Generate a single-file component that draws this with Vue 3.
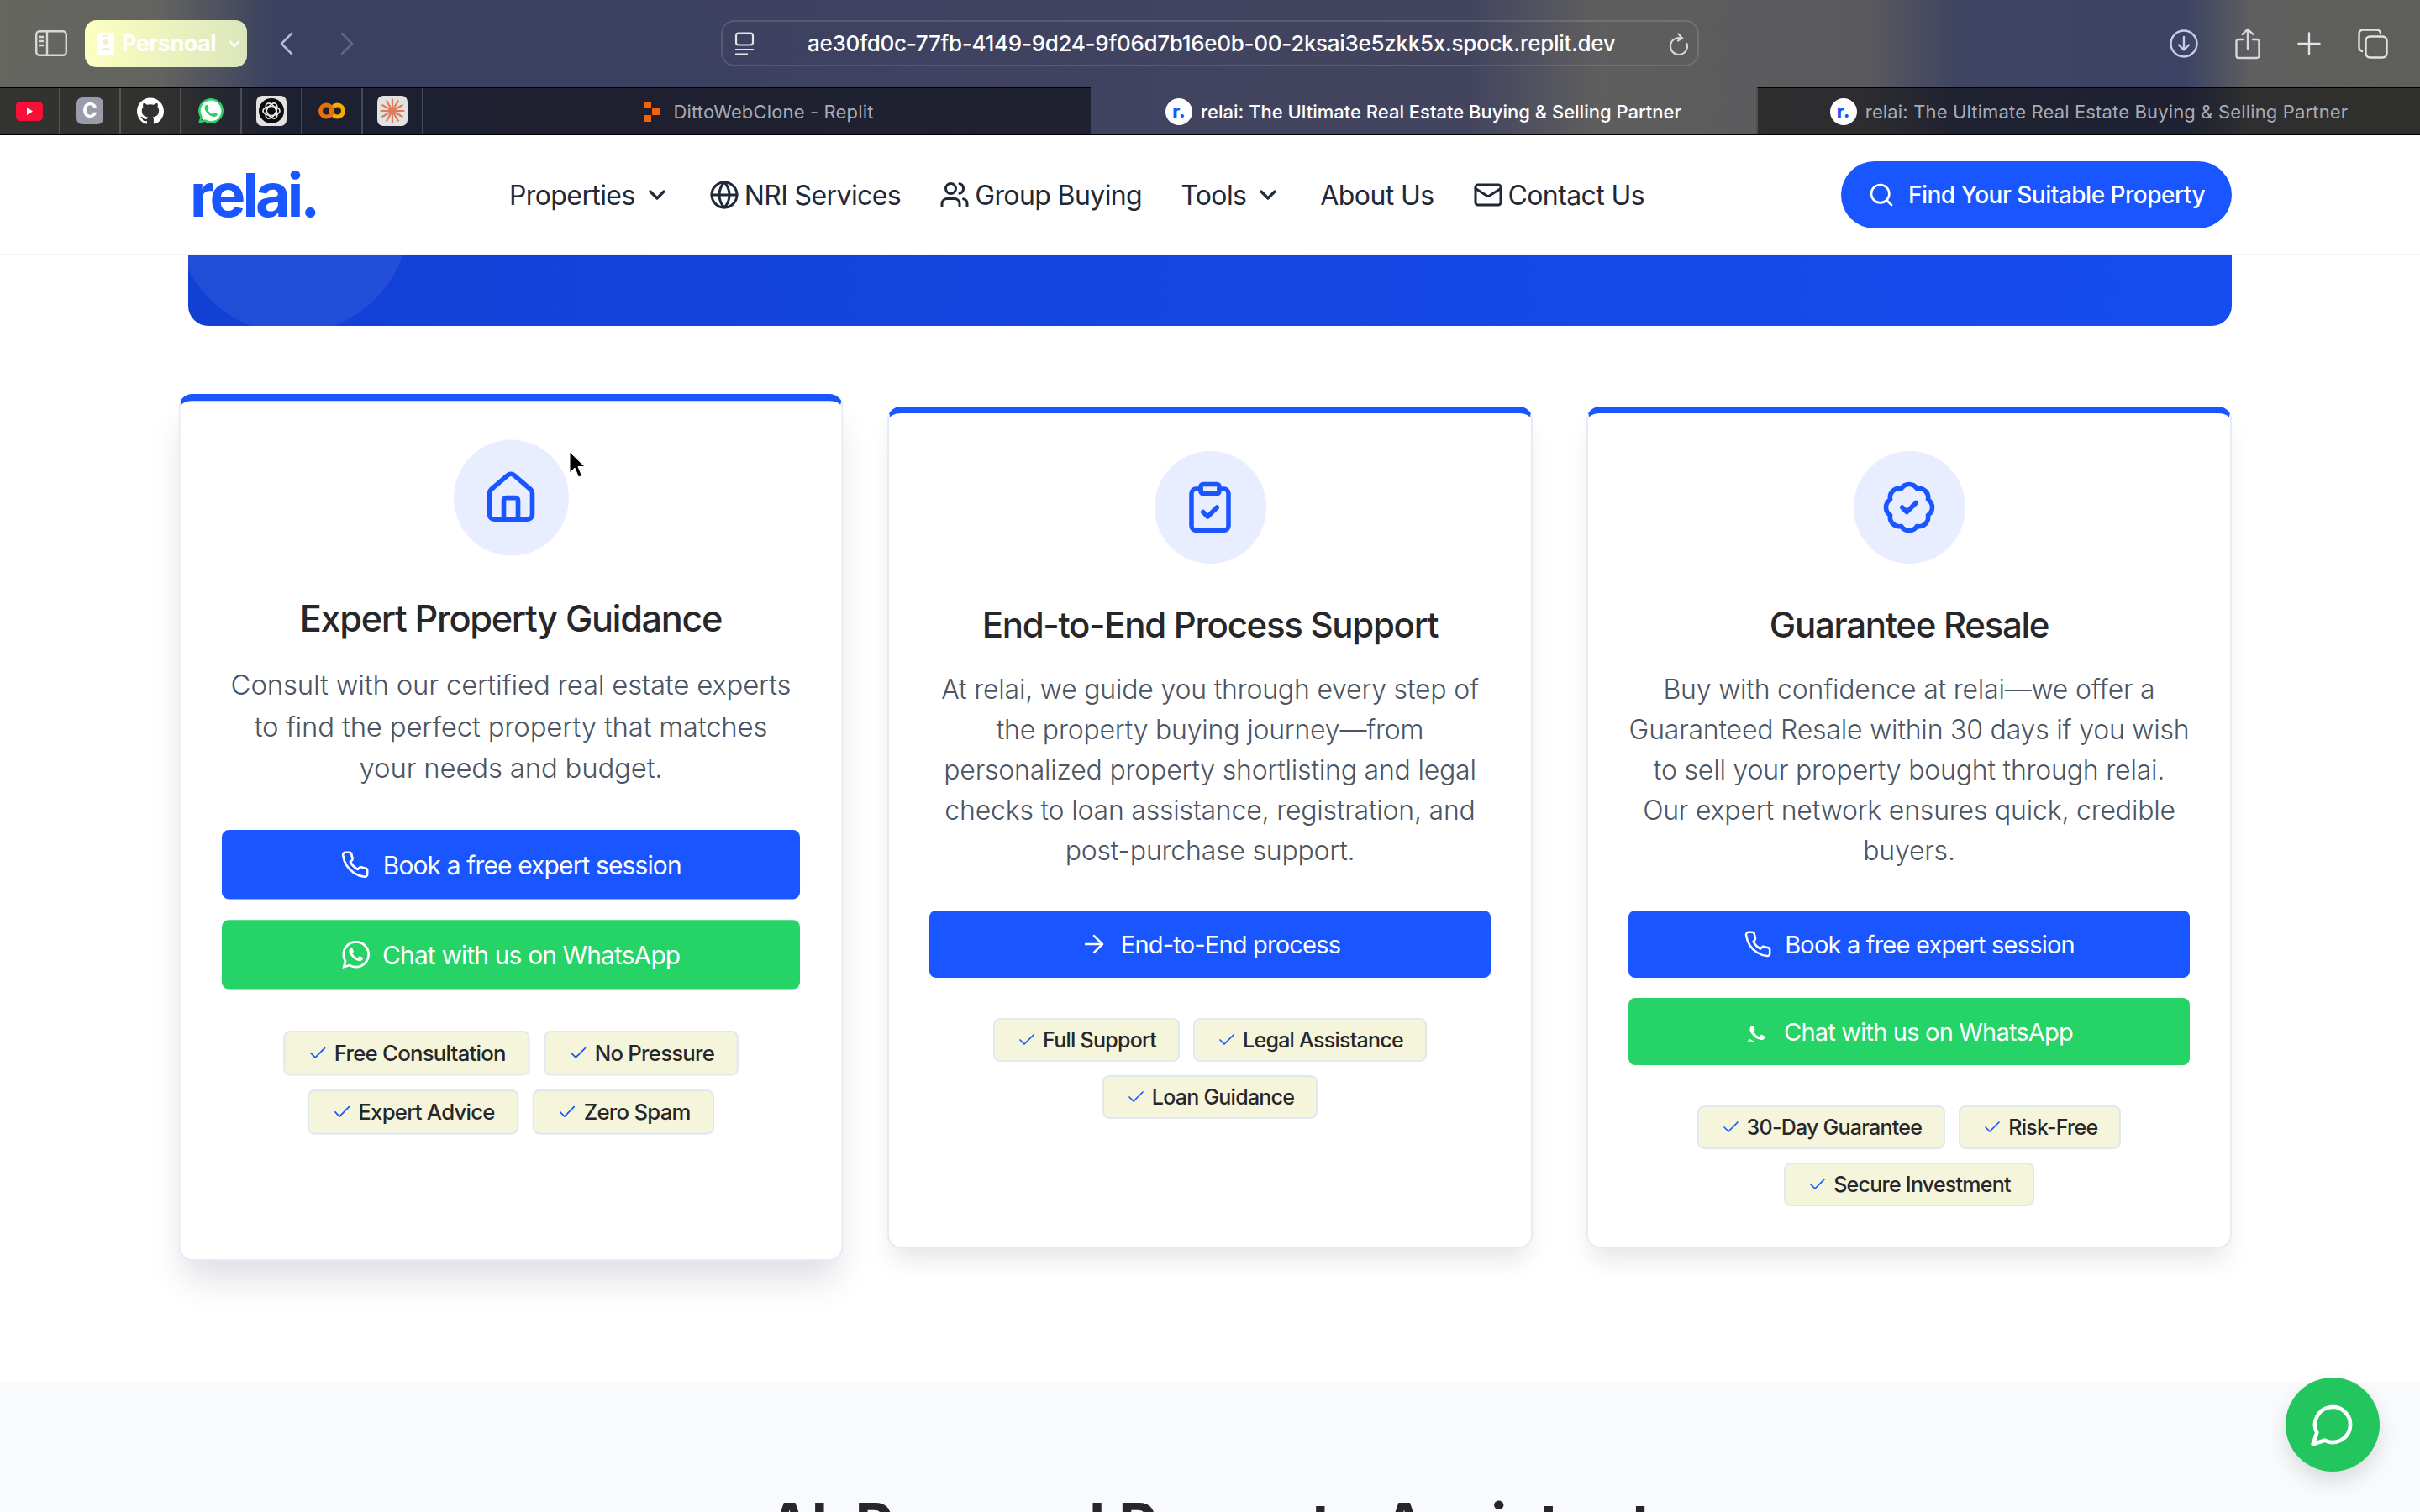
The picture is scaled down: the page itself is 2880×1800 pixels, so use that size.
<script setup>
const circle = (cx, cy, r) => `M${cx - r} ${cy}a${r} ${r} 0 1 0 ${r * 2} 0a${r} ${r} 0 1 0 ${-r * 2} 0`

const icons = {
  phone: ['M22 16.92v3a2 2 0 0 1-2.18 2 19.79 19.79 0 0 1-8.63-3.07 19.5 19.5 0 0 1-6-6 19.79 19.79 0 0 1-3.07-8.67A2 2 0 0 1 4.11 2h3a2 2 0 0 1 2 1.72 12.84 12.84 0 0 0 .7 2.81 2 2 0 0 1-.45 2.11L8.09 9.91a16 16 0 0 0 6 6l1.27-1.27a2 2 0 0 1 2.11-.45 12.84 12.84 0 0 0 2.81.7A2 2 0 0 1 22 16.92z'],
  arrow: ['M5 12h14', 'm12 5 7 7-7 7'],
  check: ['M20 6 9 17l-5-5'],
  chevron: ['m6 9 6 6 6-6'],
  globe: [circle(12, 12, 10), 'M12 2a14.5 14.5 0 0 0 0 20 14.5 14.5 0 0 0 0-20', 'M2 12h20'],
  users: ['M16 21v-2a4 4 0 0 0-4-4H6a4 4 0 0 0-4 4v2', circle(9, 7, 4), 'M22 21v-2a4 4 0 0 0-3-3.87', 'M16 3.13a4 4 0 0 1 0 7.75'],
  mail: ['M4 4h16a2 2 0 0 1 2 2v12a2 2 0 0 1-2 2H4a2 2 0 0 1-2-2V6a2 2 0 0 1 2-2z', 'm22 7-8.97 5.7a1.94 1.94 0 0 1-2.06 0L2 7'],
  search: [circle(11, 11, 8), 'm21 21-4.3-4.3'],
  house: ['M15 21v-8a1 1 0 0 0-1-1h-4a1 1 0 0 0-1 1v8', 'M3 10a2 2 0 0 1 .709-1.528l7-5.999a2 2 0 0 1 2.582 0l7 5.999A2 2 0 0 1 21 10v9a2 2 0 0 1-2 2H5a2 2 0 0 1-2-2z'],
  clipboard: ['M9 2h6a1 1 0 0 1 1 1v2a1 1 0 0 1-1 1H9a1 1 0 0 1-1-1V3a1 1 0 0 1 1-1z', 'M16 4h2a2 2 0 0 1 2 2v14a2 2 0 0 1-2 2H6a2 2 0 0 1-2-2V6a2 2 0 0 1 2-2h2', 'm9 14 2 2 4-4'],
  badge: ['M3.85 8.62a4 4 0 0 1 4.78-4.77 4 4 0 0 1 6.74 0 4 4 0 0 1 4.78 4.78 4 4 0 0 1 0 6.74 4 4 0 0 1-4.77 4.78 4 4 0 0 1-6.75 0 4 4 0 0 1-4.78-4.77 4 4 0 0 1 0-6.76Z', 'm9 12 2 2 4-4'],
}

const waPhone = 'M17.472 14.382c-.297-.149-1.758-.867-2.03-.967-.273-.099-.471-.148-.67.15-.197.297-.767.966-.94 1.164-.173.199-.347.223-.644.075-.297-.15-1.255-.463-2.39-1.475-.883-.788-1.48-1.761-1.653-2.059-.173-.297-.018-.458.13-.606.134-.133.298-.347.446-.52.149-.174.198-.298.298-.497.099-.198.05-.371-.025-.52-.075-.149-.669-1.612-.916-2.207-.242-.579-.487-.5-.669-.51-.173-.008-.371-.01-.57-.01-.198 0-.52.074-.792.372-.272.297-1.04 1.016-1.04 2.479 0 1.462 1.065 2.875 1.213 3.074.149.198 2.096 3.2 5.077 4.487.709.306 1.262.489 1.694.625.712.227 1.36.195 1.871.118.571-.085 1.758-.719 2.006-1.413.248-.694.248-1.289.173-1.413-.074-.124-.272-.198-.57-.347'
const waFull = waPhone + 'm-5.421 7.403h-.004a9.87 9.87 0 01-5.031-1.378l-.361-.214-3.741.982.998-3.648-.235-.374a9.86 9.86 0 01-1.51-5.26c.001-5.45 4.436-9.884 9.888-9.884 2.64 0 5.122 1.03 6.988 2.898a9.825 9.825 0 012.893 6.994c-.003 5.45-4.437 9.884-9.885 9.884m8.413-18.297A11.815 11.815 0 0012.05 0C5.495 0 .16 5.335.157 11.892c0 2.096.547 4.142 1.588 5.945L.057 24l6.305-1.654a11.882 11.882 0 005.683 1.448h.005c6.554 0 11.89-5.335 11.893-11.893a11.821 11.821 0 00-3.48-8.413z'

const navItems = [
  { label: 'Properties', after: 'chevron' },
  { label: 'NRI Services', before: 'globe' },
  { label: 'Group Buying', before: 'users' },
  { label: 'Tools', after: 'chevron' },
  { label: 'About Us' },
  { label: 'Contact Us', before: 'mail' },
]

const cards = [
  {
    icon: 'house',
    hovered: true,
    title: 'Expert Property Guidance',
    text: 'Consult with our certified real estate experts to find the perfect property that matches your needs and budget.',
    buttons: [
      { label: 'Book a free expert session', icon: 'phone' },
      { label: 'Chat with us on WhatsApp', wa: 'full' },
    ],
    chips: ['Free Consultation', 'No Pressure', 'Expert Advice', 'Zero Spam'],
  },
  {
    icon: 'clipboard',
    title: 'End-to-End Process Support',
    text: 'At relai, we guide you through every step of the property buying journey—from personalized property shortlisting and legal checks to loan assistance, registration, and post-purchase support.',
    buttons: [{ label: 'End-to-End process', icon: 'arrow' }],
    chips: ['Full Support', 'Legal Assistance', 'Loan Guidance'],
  },
  {
    icon: 'badge',
    title: 'Guarantee Resale',
    text: 'Buy with confidence at relai—we offer a Guaranteed Resale within 30 days if you wish to sell your property bought through relai. Our expert network ensures quick, credible buyers.',
    buttons: [
      { label: 'Book a free expert session', icon: 'phone' },
      { label: 'Chat with us on WhatsApp', wa: 'phone' },
    ],
    chips: ['30-Day Guarantee', 'Risk-Free', 'Secure Investment'],
  },
]

const sunRays = Array.from({ length: 12 }, (_, i) => i * 30)
</script>

<template>
  <div class="page">
    <header class="browser">
      <div class="toolbar">
        <svg class="sidebar-icon" viewBox="0 0 38 31" fill="none" stroke="#d8d8d8" stroke-width="2.4">
          <rect x="1.2" y="1.2" width="35.6" height="28.6" rx="4" />
          <path d="M14 1.2v28.6M5 8h5M5 13h5M5 18h5" />
        </svg>
        <div class="profile">
          <svg class="profile-icon" viewBox="0 0 20 26"><path fill="#fff" d="M2 0h16a2 2 0 0 1 2 2v22a2 2 0 0 1-2 2H2a2 2 0 0 1-2-2V2a2 2 0 0 1 2-2z" /><circle cx="10" cy="11" r="3" fill="#eef3bd" /><path fill="#eef3bd" d="M4 21c0-4 12-4 12 0zM7 3h6v2H7z" /></svg>
          <span>Persnoal</span>
          <svg class="profile-chev" viewBox="0 0 14 10" fill="none" stroke="#fff" stroke-width="2.4"><path d="m1.5 2 5.5 6 5.5-6" /></svg>
        </div>
        <svg class="nav-arrow" viewBox="0 0 16 28" fill="none" stroke="#b3bad2" stroke-width="2.6" stroke-linecap="round" stroke-linejoin="round"><path d="M14 2 2 14l12 12" /></svg>
        <svg class="nav-arrow forward" viewBox="0 0 16 28" fill="none" stroke="#5f6686" stroke-width="2.6" stroke-linecap="round" stroke-linejoin="round"><path d="m2 2 12 12L2 26" /></svg>
        <div class="urlbar">
          <svg class="url-icon" viewBox="0 0 24 28" fill="none" stroke="#e4e4ea" stroke-width="2.2"><rect x="2" y="1.5" width="20" height="14" rx="3" /><path d="M1 21h22M1 26.5h15" /></svg>
          <span class="url">ae30fd0c-77fb-4149-9d24-9f06d7b16e0b-00-2ksai3e5zkk5x.spock.replit.dev</span>
          <svg class="reload" viewBox="0 0 24 28" fill="none" stroke="#d6d6da" stroke-width="2.2" stroke-linecap="round"><path d="M15 7.5A10 10 0 1 0 21.5 14" /><path d="m11.5 2.5 4.5 5-5 3" /></svg>
        </div>
        <div class="tool-icons">
          <svg width="34" height="34" viewBox="0 0 34 34" fill="none" stroke="#c6cde4" stroke-width="2.4" stroke-linecap="round" stroke-linejoin="round"><circle cx="17" cy="17" r="15.5" /><path d="M17 9v15M11 18.5l6 6 6-6" /></svg>
          <svg width="30" height="38" viewBox="0 0 30 38" fill="none" stroke="#d6d8e0" stroke-width="2.4" stroke-linecap="round" stroke-linejoin="round"><path d="M15 25V2M8.5 8 15 1.8 21.5 8M9 14H4a2.5 2.5 0 0 0-2.5 2.5v17A2.5 2.5 0 0 0 4 36h22a2.5 2.5 0 0 0 2.5-2.5v-17A2.5 2.5 0 0 0 26 14h-5" /></svg>
          <svg width="28" height="28" viewBox="0 0 28 28" fill="none" stroke="#e4e4e4" stroke-width="2.4" stroke-linecap="round"><path d="M14 1.5v25M1.5 14h25" /></svg>
          <svg width="36" height="36" viewBox="0 0 36 36" fill="none" stroke="#e4e4e4" stroke-width="2.4"><rect x="9.5" y="9.5" width="25" height="25" rx="5" /><path d="M6 27a4.5 4.5 0 0 1-4.5-4.5V6A4.5 4.5 0 0 1 6 1.5h16.5A4.5 4.5 0 0 1 27 6" /></svg>
        </div>
      </div>
      <div class="tabbar">
        <div class="pinned">
          <div class="pin">
            <svg width="32" height="23" viewBox="0 0 32 23"><rect width="32" height="23" rx="5" fill="#f8103a" /><path d="m13 7 7 4.5-7 4.5z" fill="#fff" /></svg>
          </div>
          <div class="pin"><span class="pin-c">C</span></div>
          <div class="pin">
            <svg width="32" height="32" viewBox="0 0 24 24"><path fill="#fff" d="M12 .297c-6.630 0-12 5.373-12 12 0 5.303 3.438 9.800 8.205 11.385.6.113.82-.258.82-.577 0-.285-.01-1.040-.015-2.040-3.338.724-4.042-1.610-4.042-1.610C4.422 18.070 3.633 17.700 3.633 17.700c-1.087-.744.084-.729.084-.729 1.205.084 1.838 1.236 1.838 1.236 1.070 1.835 2.809 1.305 3.495.998.108-.776.417-1.305.760-1.605-2.665-.3-5.466-1.332-5.466-5.930 0-1.310.465-2.380 1.235-3.220-.135-.303-.540-1.523.105-3.176 0 0 1.005-.322 3.300 1.230.960-.267 1.980-.399 3-.405 1.020.006 2.040.138 3 .405 2.280-1.552 3.285-1.230 3.285-1.230.645 1.653.24 2.873.12 3.176.765.840 1.230 1.910 1.230 3.220 0 4.610-2.805 5.625-5.475 5.920.420.360.810 1.096.810 2.220 0 1.606-.015 2.896-.015 3.286 0 .315.210.690.825.570C20.565 22.092 24 17.592 24 12.297c0-6.627-5.373-12-12-12" /></svg>
          </div>
          <div class="pin">
            <svg width="30" height="30" viewBox="0 0 24 24"><circle cx="12" cy="12" r="11.5" fill="#fff" /><path fill="#25d366" :d="waFull" /></svg>
          </div>
          <div class="pin">
            <div class="pin-tile">
              <svg width="32" height="32" viewBox="0 0 32 32"><circle cx="16" cy="16" r="15" fill="#0c0c0c" /><g fill="none" stroke="#e8e8e8" stroke-width="1.6"><ellipse v-for="a in [0, 60, 120]" :key="a" cx="16" cy="16" rx="10" ry="5.5" :transform="`rotate(${a} 16 16)`" /></g></svg>
            </div>
          </div>
          <div class="pin">
            <svg width="32" height="20" viewBox="0 0 32 20" fill="none" stroke-width="5"><circle cx="22.5" cy="10" r="7" stroke="#f9ab00" /><circle cx="9.5" cy="10" r="7" stroke="#e8710a" /></svg>
          </div>
          <div class="pin">
            <div class="pin-tile">
              <svg width="30" height="30" viewBox="0 0 30 30" stroke="#de7c5a" stroke-width="2.2" stroke-linecap="round"><line v-for="a in sunRays" :key="a" x1="15" y1="15" x2="15" y2="1.5" :transform="`rotate(${a} 15 15)`" /></svg>
            </div>
          </div>
        </div>
        <div class="tab dim first">
          <svg width="20" height="24" viewBox="0 0 20 24" fill="#f26207"><path d="M1 0h8v8H1zM10 8h9v8h-9zM1 16h8v8H1z" /></svg>
          <span>DittoWebClone - Replit</span>
        </div>
        <div class="tab active">
          <span class="fav">r.</span>
          <span>relai: The Ultimate Real Estate Buying &amp; Selling Partner</span>
        </div>
        <div class="tab dim">
          <span class="fav">r.</span>
          <span>relai: The Ultimate Real Estate Buying &amp; Selling Partner</span>
        </div>
      </div>
    </header>

    <nav class="site-nav">
      <span class="logo">relai.</span>
      <ul class="menu">
        <li v-for="item in navItems" :key="item.label">
          <svg v-if="item.before" class="menu-icon" viewBox="0 0 24 24" fill="none" stroke="currentColor" stroke-width="2" stroke-linecap="round" stroke-linejoin="round"><path v-for="d in icons[item.before]" :key="d" :d="d" /></svg>
          <span>{{ item.label }}</span>
          <svg v-if="item.after" class="menu-chev" viewBox="0 0 24 24" fill="none" stroke="currentColor" stroke-width="2.4" stroke-linecap="round" stroke-linejoin="round"><path v-for="d in icons[item.after]" :key="d" :d="d" /></svg>
        </li>
      </ul>
      <button class="cta">
        <svg width="32" height="32" viewBox="0 0 24 24" fill="none" stroke="currentColor" stroke-width="2" stroke-linecap="round" stroke-linejoin="round"><path v-for="d in icons.search" :key="d" :d="d" /></svg>
        Find Your Suitable Property
      </button>
    </nav>

    <main>
      <div class="hero-end"><div class="hero-circle"></div></div>

      <section class="cards">
        <article v-for="card in cards" :key="card.title" class="card" :class="{ hovered: card.hovered }">
          <div class="card-icon">
            <svg width="66" height="66" viewBox="0 0 24 24" fill="none" stroke="currentColor" stroke-width="2" stroke-linecap="round" stroke-linejoin="round"><path v-for="d in icons[card.icon]" :key="d" :d="d" /></svg>
          </div>
          <h3>{{ card.title }}</h3>
          <p>{{ card.text }}</p>
          <div class="actions">
            <button v-for="btn in card.buttons" :key="btn.label" class="action" :class="{ green: btn.wa }">
              <svg v-if="btn.icon" class="btn-icon" viewBox="0 0 24 24" fill="none" stroke="currentColor" stroke-width="1.8" stroke-linecap="round" stroke-linejoin="round"><path v-for="d in icons[btn.icon]" :key="d" :d="d" /></svg>
              <svg v-else-if="btn.wa === 'full'" class="wa" viewBox="0 0 24 24" fill="currentColor"><path :d="waFull" /></svg>
              <!-- the icon is half broken in this card: only the handset and the tail render -->
              <svg v-else class="wa-broken" viewBox="2.4 0.9 20 20" fill="currentColor"><path :d="waPhone" /><path d="M4.2 19.2 5.6 16.6 9 18.6 12 19.4 8 19.4 6.8 18.4z" /></svg>
              {{ btn.label }}
            </button>
          </div>
          <ul class="chips">
            <li v-for="chip in card.chips" :key="chip">
              <svg width="24" height="24" viewBox="0 0 24 24" fill="none" stroke="#1a56ff" stroke-width="1.7" stroke-linecap="round" stroke-linejoin="round"><path :d="icons.check[0]" /></svg>
              {{ chip }}
            </li>
          </ul>
        </article>
      </section>

      <section class="assistant">
        <h2>AI-Powered Property Assistant</h2>
      </section>
    </main>

    <button class="chat-fab">
      <svg width="56" height="56" viewBox="0 0 24 24" fill="none" stroke="#fff" stroke-width="2" stroke-linecap="round" stroke-linejoin="round"><path d="M7.9 20A9 9 0 1 0 4 16.1L2 22Z" /></svg>
    </button>
    <svg class="cursor" width="22" height="34" viewBox="0 0 22 34"><path d="M2 1v25l6-6 4.5 11 4-1.7-4.5-10.8h8z" fill="#000" stroke="#fff" stroke-width="1" /></svg>
  </div>
</template>

<style>
html, body { margin: 0; background: #fff; }
</style>

<style scoped>
.page {
  position: relative;
  width: 2880px;
  height: 1800px;
  overflow: hidden;
  background: #fff;
  font-family: Inter, "Liberation Sans", sans-serif;
  color: #27272a;
}

/* browser chrome */
.browser {
  height: 161px;
  background: linear-gradient(90deg, #666661 0, #63635f 190px, #3a4060 330px, #3e4160 1000px, #43455f 1750px, #5e5e5e 1900px, #5a5a5e 2220px, #3f4462 2330px, #3c4364 2600px, #5f5f5f 2680px, #5e5e5a 2880px);
  color: #fff;
}

.toolbar {
  height: 103px;
  display: flex;
  align-items: center;
  padding-left: 42px;
}

.sidebar-icon { width: 38px; height: 31px; }

.profile {
  width: 193px;
  height: 56px;
  margin-left: 21px;
  border-radius: 14px;
  background: linear-gradient(90deg, #fdffc0, #dbe6bc);
  display: flex;
  align-items: center;
  padding-left: 15px;
  box-sizing: border-box;
  font-size: 27px;
  font-weight: 700;
  letter-spacing: -0.5px;
}

.profile-icon { width: 20px; height: 26px; margin-right: 9px; flex: none; }
.profile-chev { width: 14px; height: 10px; margin-left: 15px; flex: none; }

.nav-arrow { width: 16px; height: 28px; margin-left: 39px; }
.nav-arrow.forward { margin-left: 56px; }

.urlbar {
  width: 1164px;
  height: 55px;
  margin-left: 437px;
  flex: none;
  border: 2px solid rgba(255, 255, 255, 0.13);
  border-radius: 16px;
  box-sizing: border-box;
  display: flex;
  align-items: center;
  padding-left: 14px;
}

.url-icon { width: 24px; height: 28px; flex: none; }
.url { margin-left: 63px; font-size: 26px; font-weight: 500; letter-spacing: -0.3px; white-space: nowrap; }
.reload { width: 24px; height: 28px; margin-left: 64px; flex: none; }

.tool-icons {
  display: flex;
  align-items: center;
  gap: 44px;
  margin-left: 560px;
}

.tabbar {
  height: 58px;
  display: flex;
  box-sizing: border-box;
  border-bottom: 2px solid #000;
  font-size: 22px;
  letter-spacing: 0.15px;
}

.pinned {
  display: flex;
  background: rgba(0, 0, 0, 0.5);
  border-top: 2px solid #000;
}

.pin {
  width: 70px;
  height: 54px;
  display: flex;
  align-items: center;
  justify-content: center;
  border-right: 2px solid rgba(255, 255, 255, 0.18);
}

.pin-c {
  width: 32px;
  height: 32px;
  border-radius: 7px;
  background: #9b9cab;
  font-size: 24px;
  font-weight: 700;
  text-align: center;
  line-height: 32px;
}

.pin-tile {
  width: 36px;
  height: 36px;
  border-radius: 7px;
  background: #e2e2e2;
  display: flex;
  align-items: center;
  justify-content: center;
}

.tab {
  flex: 1;
  display: flex;
  align-items: center;
  justify-content: center;
  gap: 10px;
  padding-top: 1px;
  font-weight: 500;
  white-space: nowrap;
}

.tab.dim {
  background: rgba(0, 0, 0, 0.5);
  border-top: 2px solid #000;
  border-left: 2px solid rgba(255, 255, 255, 0.16);
  color: #a9abb3;
  font-weight: 400;
}

.tab.first { flex: none; width: 794px; gap: 16px; border-left: none; padding-left: 3px; box-sizing: border-box; }
.tab.active { flex: none; width: 792px; padding-top: 3px; letter-spacing: 0; box-sizing: border-box; }

.fav {
  width: 32px;
  height: 32px;
  border-radius: 50%;
  background: #fff;
  color: #1a56ff;
  font-size: 22px;
  font-weight: 800;
  line-height: 30px;
  text-align: center;
}

/* site nav */
.site-nav {
  height: 143px;
  box-sizing: border-box;
  padding: 1px 224px 0 226px;
  display: flex;
  align-items: center;
  border-bottom: 2px solid #f1f2f4;
  background: #fff;
}

.logo {
  width: 148px;
  font-size: 72px;
  font-weight: 700;
  letter-spacing: -4px;
  line-height: 1;
  color: #1a56ff;
}

.menu {
  list-style: none;
  display: flex;
  align-items: center;
  gap: 46px;
  margin: 0 0 0 232px;
  padding: 0;
  font-size: 32px;
  font-weight: 400;
  letter-spacing: -0.6px;
  color: #1f2937;
}

.menu li { display: flex; align-items: center; }
.menu-icon { width: 36px; height: 36px; margin-right: 6px; }
.menu-chev { width: 32px; height: 32px; margin-left: 10px; }

.cta {
  margin-left: auto;
  width: 465px;
  height: 80px;
  border: none;
  border-radius: 40px;
  background: #1a56ff;
  color: #fff;
  font: 500 28px Inter, sans-serif;
  letter-spacing: -0.5px;
  display: flex;
  align-items: center;
  justify-content: center;
  gap: 16px;
}

/* hero bottom edge, the rest is scrolled under the nav */
.hero-end {
  position: relative;
  height: 84px;
  margin: 0 224px;
  overflow: hidden;
  border-radius: 0 0 24px 24px;
  background: linear-gradient(90deg, #1240d5, #164df0);
}

.hero-circle {
  position: absolute;
  left: -15px;
  top: -185px;
  width: 278px;
  height: 278px;
  border-radius: 50%;
  background: rgba(255, 255, 255, 0.07);
}

/* cards */
.cards {
  display: grid;
  grid-template-columns: repeat(3, 1fr);
  gap: 64px;
  margin: 96px 224px 0;
}

.card {
  background: #fff;
  border: 2px solid #e6ebf5;
  border-top: 8px solid #1a56ff;
  border-radius: 16px;
  box-shadow: 0 20px 30px -8px rgba(15, 23, 42, 0.12);
  padding: 45px 48px 48px;
  display: flex;
  flex-direction: column;
  align-items: center;
  text-align: center;
}

.card.hovered {
  transform: scale(1.03);
  box-shadow: 0 28px 40px -8px rgba(15, 23, 42, 0.14);
}

.card-icon {
  width: 133px;
  height: 134px;
  border-radius: 50%;
  background: #e8edff;
  color: #1a56ff;
  display: flex;
  align-items: center;
  justify-content: center;
}

.card h3 {
  margin: 42px 0 0;
  font-size: 42px;
  line-height: 62px;
  font-weight: 500;
  letter-spacing: -1.3px;
  color: #27272a;
}

.card p {
  margin: 22px 0 0;
  font-size: 32px;
  line-height: 48px;
  font-weight: 300;
  letter-spacing: -0.2px;
  color: #4b5563;
}

.card.hovered p { padding: 0 6px; }

.actions {
  align-self: stretch;
  display: flex;
  flex-direction: column;
  gap: 24px;
  margin-top: 47px;
}

.action {
  height: 80px;
  border: none;
  border-radius: 8px;
  background: #1a56ff;
  color: #fff;
  font: 400 29px Inter, sans-serif;
  letter-spacing: -0.8px;
  display: flex;
  align-items: center;
  justify-content: center;
  gap: 15px;
}

.action.green { background: #25d366; }
.btn-icon { width: 34px; height: 34px; }
.wa { width: 32px; height: 32px; }
.wa-broken { width: 30px; height: 30px; margin-right: 1px; }

.chips {
  list-style: none;
  display: flex;
  flex-wrap: wrap;
  justify-content: center;
  gap: 16px;
  margin: 48px 0 0;
  padding: 0;
}

.chips li {
  height: 52px;
  box-sizing: border-box;
  padding: 0 26px;
  border: 2px solid #e2e8f0;
  border-radius: 8px;
  background: #f5f5dc;
  display: flex;
  align-items: center;
  gap: 7px;
  font-size: 25px;
  font-weight: 500;
  letter-spacing: -0.75px;
  color: #27272a;
}

.assistant {
  margin-top: 160px;
  height: 400px;
  background: #f9fafb;
  padding-top: 134px;
  box-sizing: border-box;
  text-align: center;
}

.assistant h2 {
  margin: 0;
  font-size: 70px;
  line-height: 1;
  font-weight: 700;
  letter-spacing: -0.3px;
  color: #27272a;
}

.chat-fab {
  position: absolute;
  left: 2720px;
  top: 1640px;
  width: 112px;
  height: 112px;
  border: none;
  border-radius: 50%;
  background: #22c55e;
  box-shadow: 0 12px 24px rgba(0, 0, 0, 0.12);
  display: flex;
  align-items: center;
  justify-content: center;
}

.cursor {
  position: absolute;
  left: 676px;
  top: 537px;
}
</style>
